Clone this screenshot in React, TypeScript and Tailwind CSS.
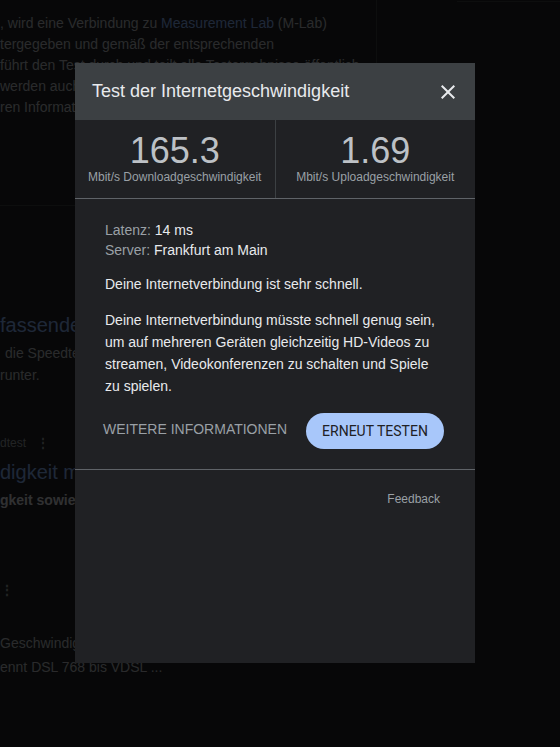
import React from "react";

const CloseIcon = () => (
  <svg width="24" height="24" viewBox="0 0 24 24" fill="currentColor">
    <path d="M19 6.41L17.59 5 12 10.59 6.41 5 5 6.41 10.59 12 5 17.59 6.41 19 12 13.41 17.59 19 19 17.59 13.41 12z" />
  </svg>
);

const Stat = ({ value, label, divider }: { value: string; label: string; divider?: boolean }) => (
  <div
    className={
      "flex-1 flex flex-col items-center pt-[13px] " +
      (divider ? "border-l border-[#3c4043]" : "")
    }
  >
    <div className="text-[36px] leading-[36px] text-[#bdc1c6]">{value}</div>
    <div className="text-[12px] leading-4 text-[#9aa0a6]">{label}</div>
  </div>
);

const App = () => {
  return (
    <div className="relative w-[560px] h-[747px] overflow-hidden bg-[#202124] font-['Liberation_Sans',Arial,sans-serif]">
      {/* page behind the dialog */}
      <div className="flex">
        <div className="w-[377px] h-[206px] border-r border-b border-[#3c4043] pt-[13px] text-[14px] leading-[21px] text-[#bdc1c6] whitespace-nowrap overflow-hidden">
          <p>
            , wird eine Verbindung zu{" "}
            <span className="text-[#8ab4f8]">Measurement Lab</span> (M-Lab)
          </p>
          <p>tergegeben und gemäß der entsprechenden</p>
          <p>führt den Test durch und teilt alle Testergebnisse öffentlich</p>
          <p className="w-[75px] overflow-hidden">werden auch</p>
          <p className="w-[75px] overflow-hidden">ren Informati</p>
        </div>
        <div className="ml-[80px] flex-1 h-[2px] border-b border-[#3c4043]" />
      </div>
      <div className="whitespace-nowrap text-[#bdc1c6]">
        <div className="w-[75px] overflow-hidden">
          <h3 className="mt-[106px] text-[20px] leading-[26px] text-[#8ab4f8]">fassende</h3>
          <p className="mt-[4px] pl-[5px] text-[14px] leading-[22px]">die Speedte</p>
          <p className="text-[14px] leading-[22px]">runter.</p>
          <div className="mt-[49px] flex items-center text-[12px] leading-4 text-[#9aa0a6]">
            <span>dtest</span>
            <span className="ml-[11px] font-bold">⋮</span>
          </div>
          <h3 className="mt-[8px] text-[20px] leading-[26px] text-[#8ab4f8]">digkeit m</h3>
          <p className="mt-[4px] text-[14px] leading-[22px] font-bold text-[#dadce0]">
            gkeit sowie
          </p>
          <div className="mt-[71px] text-[14px] leading-4 font-bold text-[#9aa0a6]">⋮</div>
          <p className="mt-[33px] text-[14px] leading-[24px]">Geschwindigk</p>
        </div>
        <p className="text-[14px] leading-[24px]">ennt DSL 768 bis VDSL ...</p>
      </div>

      {/* dim overlay */}
      <div className="absolute inset-0 bg-[rgba(0,0,0,0.78)]" />

      {/* dialog */}
      <div className="absolute left-[75px] top-[63px] w-[400px] h-[600px] bg-[#202124] flex flex-col">
        <div className="h-[57px] bg-[#3c4043] flex items-center justify-between pl-[17px] pr-[15px]">
          <h2 className="text-[18px] text-[#e8eaed]">Test der Internetgeschwindigkeit</h2>
          <button className="text-[#e8eaed]">
            <CloseIcon />
          </button>
        </div>

        <div className="flex h-[79px] border-b border-[#5f6368]">
          <Stat value="165.3" label="Mbit/s Downloadgeschwindigkeit" />
          <Stat value="1.69" label="Mbit/s Uploadgeschwindigkeit" divider />
        </div>

        <div className="px-[30px] pt-[21px] text-[14px] text-[#e8eaed]">
          <div className="leading-5">
            <p>
              <span className="text-[#9aa0a6]">Latenz:</span> 14 ms
            </p>
            <p>
              <span className="text-[#9aa0a6]">Server:</span> Frankfurt am Main
            </p>
          </div>
          <p className="mt-[13px] leading-[22px]">Deine Internetverbindung ist sehr schnell.</p>
          <p className="mt-[14px] leading-[22px] max-w-[336px]">
            Deine Internetverbindung müsste schnell genug sein, um auf mehreren Geräten
            gleichzeitig HD-Videos zu streamen, Videokonferenzen zu schalten und Spiele zu
            spielen.
          </p>
          <div className="mt-[16px] flex items-center">
            <button className="-ml-[2px] mb-[4px] text-[14px] text-[#9aa0a6]">
              WEITERE INFORMATIONEN
            </button>
            <button className="ml-[19px] h-[36px] px-[16px] rounded-full bg-[#a8c7fa] text-[#202124] text-[14px] font-['Roboto',sans-serif]">
              ERNEUT TESTEN
            </button>
          </div>
        </div>

        <div className="mt-[20px] border-t border-[#5f6368]" />
        <div className="flex justify-end pr-[35px] pt-[21px] text-[12px] leading-4 text-[#9aa0a6]">
          Feedback
        </div>
      </div>
    </div>
  );
};

export default App;
